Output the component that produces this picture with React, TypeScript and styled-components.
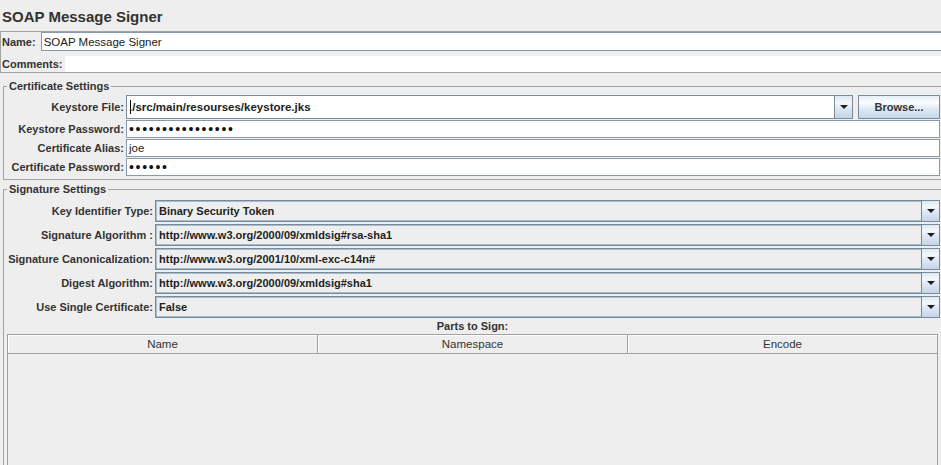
import React from "react";
import styled, { createGlobalStyle } from "styled-components";

const GlobalStyle = createGlobalStyle`
  html, body {
    margin: 0;
    padding: 0;
    background: #eeeeee;
    overflow: hidden;
  }
  body {
    font-family: "Liberation Sans", Arial, sans-serif;
    font-size: 11px;
    color: #333333;
  }
`;

const Page = styled.div`
  width: 944px;
  height: 465px;
  display: flex;
  flex-direction: column;
`;

const Title = styled.h1`
  margin: 0;
  height: 31px;
  box-sizing: border-box;
  padding: 4px 0 0 2px;
  font-size: 15px;
  line-height: 26px;
  font-weight: bold;
  color: #333333;
`;

const NamePanel = styled.div`
  border: 1px solid #a3a3a3;
  padding-left: 1px;
  display: flex;
  flex-direction: column;
  gap: 5px;
`;

const NameRow = styled.div<{ $gap: number; $height: number }>`
  display: flex;
  align-items: center;
  gap: ${(p) => p.$gap}px;
  height: ${(p) => p.$height}px;
`;

const Label = styled.label`
  font-weight: bold;
  font-size: 11px;
  color: #333333;
  white-space: nowrap;
`;

const RightLabel = styled(Label)`
  text-align: right;
  align-self: center;
`;

const TextField = styled.div`
  flex: 1;
  height: 100%;
  box-sizing: border-box;
  border: 1px solid #8a9aab;
  background: #ffffff;
  display: flex;
  align-items: center;
  padding-left: 2px;
  font-size: 11.5px;
  color: #222222;
  white-space: nowrap;
  overflow: hidden;
`;

const TextArea = styled.div`
  flex: 1;
  height: 100%;
  background: #ffffff;
`;

const Group = styled.fieldset<{ $grow?: boolean; $top: number }>`
  margin: ${(p) => p.$top}px 0 0 3px;
  padding: 2px 3px 3px 0;
  border: 1px solid #a3a3a3;
  min-width: 0;
  display: flex;
  flex-direction: column;
  ${(p) => (p.$grow ? "flex: 1; padding-bottom: 0; border-bottom: none;" : "")}
`;

const Legend = styled.legend`
  padding: 0 2px;
  margin-left: 3px;
  font-weight: bold;
  font-size: 11px;
  line-height: 14px;
  color: #333333;
`;

const FormGrid = styled.div<{ $labelWidth: number; $rowGap: number; $top: number }>`
  display: grid;
  grid-template-columns: ${(p) => p.$labelWidth}px 1fr;
  column-gap: 2px;
  row-gap: ${(p) => p.$rowGap}px;
  margin-top: ${(p) => p.$top}px;
`;

const Cell = styled.div<{ $height: number }>`
  height: ${(p) => p.$height}px;
  display: flex;
  gap: 5px;
`;

const Combo = styled.div<{ $editable?: boolean }>`
  flex: 1;
  display: flex;
  box-sizing: border-box;
  border: 1px solid #7a8a99;
  box-shadow: ${(p) => (p.$editable ? "none" : "inset 0 0 0 1px #a8bccf")};
  background: ${(p) => (p.$editable ? "#ffffff" : "#eeeeee")};
  min-width: 0;
`;

const ComboValue = styled.div<{ $size?: number }>`
  flex: 1;
  display: flex;
  align-items: center;
  padding-left: 3px;
  font-weight: bold;
  font-size: ${(p) => p.$size ?? 11}px;
  color: #222222;
  white-space: nowrap;
  overflow: hidden;
`;

const ArrowButton = styled.div`
  width: 17px;
  border-left: 1px solid #7a8a99;
  background: linear-gradient(180deg, #dde8f3 0%, #f4f8fb 30%, #dde8f3 55%, #c3d5e8 100%);
  display: flex;
  align-items: center;
  justify-content: center;
`;

const BrowseButton = styled.button`
  width: 82px;
  box-sizing: border-box;
  border: 1px solid #7a8a99;
  background: linear-gradient(180deg, #e6eef6 0%, #fbfdfe 30%, #dde8f3 60%, #c6d8ea 100%);
  font-family: inherit;
  font-weight: bold;
  font-size: 11px;
  color: #333333;
  padding: 0;
`;

const Caret = styled.span`
  display: inline-block;
  width: 1px;
  height: 14px;
  background: #000000;
  margin-right: -2px;
`;

const Dots = styled.span`
  font-size: 14px;
  letter-spacing: 1.7px;
  color: #111111;
  line-height: 1;
`;

const PartsTitle = styled.div`
  height: 16px;
  line-height: 16px;
  text-align: center;
  font-weight: bold;
  font-size: 11px;
  color: #333333;
  margin: 0 2px 0 3px;
`;

const Table = styled.div`
  flex: 1;
  margin: 0 2px 0 3px;
  display: flex;
  flex-direction: column;
`;

const HeaderRow = styled.div`
  display: grid;
  grid-template-columns: repeat(3, 1fr);
  height: 20px;
  border: 1px solid #a0a0a0;
  border-right: none;
  box-sizing: border-box;
`;

const HeaderCell = styled.div`
  display: flex;
  align-items: center;
  justify-content: center;
  border-right: 1px solid #a0a0a0;
  box-shadow: inset 1px 1px 0 #ffffff;
  font-size: 11.5px;
  color: #333333;
`;

const TableBody = styled.div`
  flex: 1;
  border-left: 1px solid #a0a0a0;
  border-right: 1px solid #a0a0a0;
  background: #eeeeee;
`;

const Arrow = () => (
  <svg width="8" height="4" viewBox="0 0 8 4">
    <polygon points="0,0 8,0 4,4" fill="#1e1e1e" />
  </svg>
);

const signatureRows = [
  { label: "Key Identifier Type:", value: "Binary Security Token" },
  { label: "Signature Algorithm :", value: "http://www.w3.org/2000/09/xmldsig#rsa-sha1" },
  { label: "Signature Canonicalization:", value: "http://www.w3.org/2001/10/xml-exc-c14n#" },
  { label: "Digest Algorithm:", value: "http://www.w3.org/2000/09/xmldsig#sha1" },
  { label: "Use Single Certificate:", value: "False" },
];

export default function App(): JSX.Element {
  return (
    <Page>
      <GlobalStyle />
      <Title>SOAP Message Signer</Title>

      <NamePanel>
        <NameRow $gap={5} $height={19}>
          <Label>Name:</Label>
          <TextField>SOAP Message Signer</TextField>
        </NameRow>
        <NameRow $gap={2} $height={16}>
          <Label>Comments:</Label>
          <TextArea />
        </NameRow>
      </NamePanel>

      <Group $top={6}>
        <Legend>Certificate Settings</Legend>
        <FormGrid $labelWidth={120} $rowGap={1} $top={0}>
          <RightLabel>Keystore File:</RightLabel>
          <Cell $height={24}>
            <Combo $editable>
              <ComboValue $size={11.5}>
                <Caret />
                ./src/main/resourses/keystore.jks
              </ComboValue>
              <ArrowButton>
                <Arrow />
              </ArrowButton>
            </Combo>
            <BrowseButton>Browse...</BrowseButton>
          </Cell>

          <RightLabel>Keystore Password:</RightLabel>
          <Cell $height={18}>
            <TextField>
              <Dots>••••••••••••••••</Dots>
            </TextField>
          </Cell>

          <RightLabel>Certificate Alias:</RightLabel>
          <Cell $height={18}>
            <TextField>joe</TextField>
          </Cell>

          <RightLabel>Certificate Password:</RightLabel>
          <Cell $height={18}>
            <TextField>
              <Dots>••••••</Dots>
            </TextField>
          </Cell>
        </FormGrid>
      </Group>

      <Group $grow $top={2}>
        <Legend>Signature Settings</Legend>
        <FormGrid $labelWidth={149} $rowGap={2} $top={2}>
          {signatureRows.map((row) => (
            <React.Fragment key={row.label}>
              <RightLabel>{row.label}</RightLabel>
              <Cell $height={22}>
                <Combo>
                  <ComboValue>{row.value}</ComboValue>
                  <ArrowButton>
                    <Arrow />
                  </ArrowButton>
                </Combo>
              </Cell>
            </React.Fragment>
          ))}
        </FormGrid>
        <PartsTitle>Parts to Sign:</PartsTitle>
        <Table>
          <HeaderRow>
            <HeaderCell>Name</HeaderCell>
            <HeaderCell>Namespace</HeaderCell>
            <HeaderCell>Encode</HeaderCell>
          </HeaderRow>
          <TableBody />
        </Table>
      </Group>
    </Page>
  );
}
